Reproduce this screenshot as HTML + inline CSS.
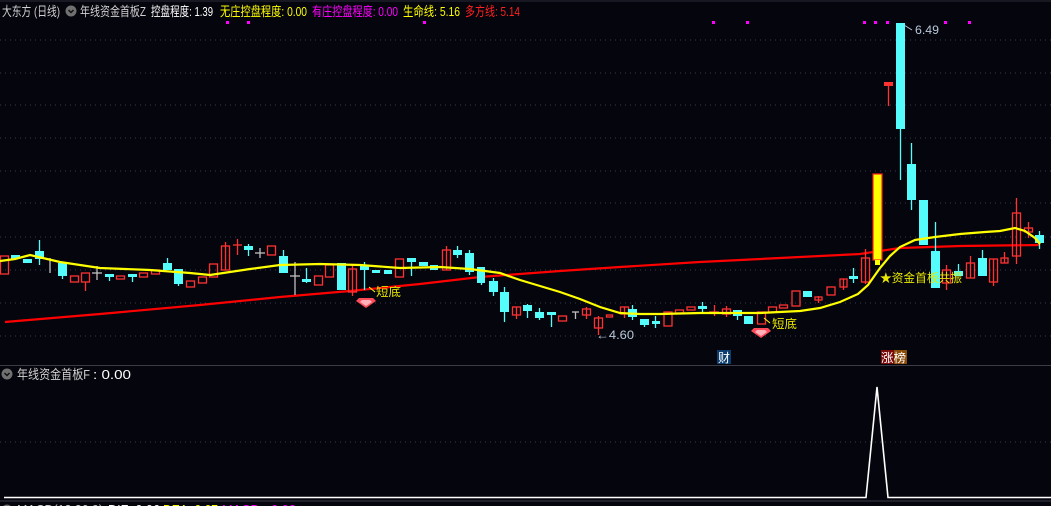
<!DOCTYPE html>
<html><head><meta charset="utf-8"><style>
html,body{margin:0;padding:0;background:#05050d;width:1051px;height:506px;overflow:hidden}
svg{display:block}
text{font-family:"Liberation Sans","Noto Sans CJK SC",sans-serif;font-size:12px}
.h{font-size:13px}
.r{fill:none;stroke:#ff3232;stroke-width:1.3}
.rf{fill:#ff3232}
.c{fill:#54fcfc}
.w{stroke:#ff3232;stroke-width:1.3}
.cw{stroke:#54fcfc;stroke-width:1.3}
.g{stroke:#c0c0c0;stroke-width:1.3}
.grid{stroke:#3a3a4a;stroke-width:1;stroke-dasharray:1 4}
</style></head><body>
<svg width="1051" height="506" viewBox="0 0 1051 506" xmlns="http://www.w3.org/2000/svg">
<g class="grid">
<line x1="0" y1="40" x2="1051" y2="40"/><line x1="0" y1="73" x2="1051" y2="73"/>
<line x1="0" y1="105" x2="1051" y2="105"/><line x1="0" y1="138" x2="1051" y2="138"/>
<line x1="0" y1="171" x2="1051" y2="171"/><line x1="0" y1="203" x2="1051" y2="203"/>
<line x1="0" y1="237" x2="1051" y2="237"/><line x1="0" y1="270" x2="1051" y2="270"/>
<line x1="0" y1="303" x2="1051" y2="303"/><line x1="0" y1="336" x2="1051" y2="336"/>
<line x1="0" y1="442" x2="1051" y2="442"/>
</g>
<line x1="0" y1="365.5" x2="1051" y2="365.5" stroke="#3c3c48" stroke-width="1"/>
<line x1="0" y1="1" x2="1051" y2="1" stroke="#2a2a36"/>

<text class="h" x="2" y="16" fill="#d0d0d0" textLength="58" lengthAdjust="spacingAndGlyphs">大东方 (日线)</text>
<circle cx="71" cy="11" r="5.5" fill="#707070"/><path d="M68.5 10l2.5 2.5 2.5-2.5" stroke="#111" stroke-width="1.5" fill="none"/>
<text class="h" x="80" y="16" fill="#d0d0d0" textLength="66" lengthAdjust="spacingAndGlyphs">年线资金首板Z</text>
<text class="h" x="151" y="16" fill="#ffffff" textLength="62" lengthAdjust="spacingAndGlyphs">控盘程度: 1.39</text>
<text class="h" x="220" y="16" fill="#ffff00" textLength="87" lengthAdjust="spacingAndGlyphs">无庄控盘程度: 0.00</text>
<text class="h" x="312" y="16" fill="#ff00ff" textLength="86" lengthAdjust="spacingAndGlyphs">有庄控盘程度: 0.00</text>
<text class="h" x="403" y="16" fill="#ffff00" textLength="57" lengthAdjust="spacingAndGlyphs">生命线: 5.16</text>
<text class="h" x="465" y="16" fill="#ff2020" textLength="55" lengthAdjust="spacingAndGlyphs">多方线: 5.14</text>

<g fill="#ff00ff">
<rect x="226" y="21" width="3" height="3"/><rect x="247" y="21" width="3" height="3"/><rect x="423" y="21" width="3" height="3"/>
<rect x="712" y="21" width="3" height="3"/><rect x="746" y="21" width="3" height="3"/><rect x="863" y="21" width="3" height="3"/>
<rect x="874" y="21" width="3" height="3"/><rect x="886" y="21" width="3" height="3"/><rect x="944" y="21" width="3" height="3"/><rect x="968" y="21" width="3" height="3"/>
</g>

<polyline fill="none" stroke="#ff0000" stroke-width="2.2" points="5,322 100,314 200,305 280,297 350,291 420,284 480,277 560,271 620,267 700,262 780,258 860,254 900,248 960,246 1040,245"/>

<g>
<rect class="r" x="0.5" y="256" width="8" height="18"/>
<rect class="c" x="11" y="255" width="9" height="4"/>
<rect class="c" x="23" y="259" width="9" height="4"/>
<line class="cw" x1="39.5" y1="240" x2="39.5" y2="265"/><rect class="c" x="35" y="251" width="9" height="8"/>
<line class="g" x1="50" y1="258" x2="50" y2="273"/>
<line class="cw" x1="62.5" y1="263" x2="62.5" y2="279"/><rect class="c" x="58" y="263" width="9" height="13"/>
<rect class="r" x="70.5" y="276" width="8" height="6"/>
<line class="w" x1="85.5" y1="282" x2="85.5" y2="291"/><rect class="r" x="81.5" y="273" width="8" height="9"/>
<line class="g" x1="97" y1="266" x2="97" y2="280"/><line class="g" x1="92" y1="273" x2="102" y2="273"/>
<line class="cw" x1="109.5" y1="274" x2="109.5" y2="281"/><rect class="c" x="105" y="274" width="9" height="3"/>
<rect class="r" x="116.5" y="276" width="8" height="3"/>
<line class="cw" x1="132.5" y1="274" x2="132.5" y2="282"/><rect class="c" x="128" y="274" width="9" height="3"/>
<rect class="r" x="139.5" y="273" width="8" height="4"/>
<rect class="r" x="151.5" y="270" width="8" height="4"/>
<line class="cw" x1="167.5" y1="258" x2="167.5" y2="270"/><rect class="c" x="163" y="263" width="9" height="7"/>
<line class="cw" x1="178.5" y1="269" x2="178.5" y2="286"/><rect class="c" x="174" y="269" width="9" height="15"/>
<rect class="r" x="186.5" y="281" width="8" height="6"/>
<rect class="r" x="198.5" y="277" width="8" height="6"/>
<rect class="r" x="209.5" y="264" width="8" height="13"/>
<line class="w" x1="225.5" y1="242" x2="225.5" y2="270"/><rect class="r" x="221.5" y="246" width="8" height="24"/>
<line class="w" x1="237.5" y1="239" x2="237.5" y2="255"/><line class="w" x1="233" y1="245" x2="242" y2="245"/>
<line class="cw" x1="248.5" y1="244" x2="248.5" y2="256"/><rect class="c" x="244" y="246" width="9" height="4"/>
<line class="g" x1="260" y1="248" x2="260" y2="258"/><line class="g" x1="255" y1="253" x2="265" y2="253"/>
<rect class="r" x="267.5" y="246" width="8" height="9"/>
<line class="cw" x1="283.5" y1="250" x2="283.5" y2="273"/><rect class="c" x="279" y="256" width="9" height="17"/>
<line class="g" x1="295" y1="262" x2="295" y2="295"/><line class="g" x1="290" y1="276" x2="300" y2="276"/>
<line class="cw" x1="306.5" y1="268" x2="306.5" y2="283"/><rect class="c" x="302" y="279" width="9" height="3"/>
<rect class="r" x="314.5" y="276" width="8" height="9"/>
<rect class="r" x="325.5" y="265" width="8" height="12"/>
<rect class="c" x="337" y="263" width="9" height="27"/>
<line class="w" x1="352.5" y1="265" x2="352.5" y2="296"/><rect class="r" x="348.5" y="269" width="8" height="23"/>
<line class="cw" x1="364.5" y1="262" x2="364.5" y2="290"/><rect class="c" x="360" y="266" width="9" height="4"/>
<rect class="c" x="372" y="270" width="8" height="3"/>
<rect class="c" x="384" y="270" width="8" height="4"/>
<rect class="r" x="395.5" y="259" width="8" height="18"/>
<line class="cw" x1="411.5" y1="258" x2="411.5" y2="276"/><rect class="c" x="407" y="258" width="9" height="4"/>
<rect class="c" x="419" y="262" width="9" height="4"/>
<rect class="c" x="430" y="265" width="8" height="5"/>
<line class="w" x1="446.5" y1="246" x2="446.5" y2="270"/><rect class="r" x="442.5" y="250" width="8" height="20"/>
<line class="cw" x1="457.5" y1="246" x2="457.5" y2="258"/><rect class="c" x="453" y="250" width="9" height="5"/>
<line class="cw" x1="469.5" y1="250" x2="469.5" y2="275"/><rect class="c" x="465" y="253" width="9" height="19"/>
<line class="cw" x1="481.5" y1="267" x2="481.5" y2="285"/><rect class="c" x="477" y="267" width="8" height="16"/>
<line class="cw" x1="493.5" y1="278" x2="493.5" y2="296"/><rect class="c" x="489" y="281" width="9" height="11"/>
<line class="cw" x1="504.5" y1="287" x2="504.5" y2="322"/><rect class="c" x="500" y="292" width="9" height="20"/>
<line class="w" x1="516.5" y1="307" x2="516.5" y2="319"/><rect class="r" x="512.5" y="307" width="8" height="8"/>
<line class="cw" x1="527.5" y1="304" x2="527.5" y2="318"/><rect class="c" x="523" y="305" width="9" height="6"/>
<line class="cw" x1="539.5" y1="308" x2="539.5" y2="320"/><rect class="c" x="535" y="312" width="9" height="6"/>
<line class="cw" x1="551.5" y1="312" x2="551.5" y2="327"/><rect class="c" x="547" y="312" width="9" height="3"/>
<rect class="r" x="558.5" y="316" width="8" height="5"/>
<line class="g" x1="575.5" y1="312" x2="575.5" y2="319"/><line class="g" x1="572" y1="312" x2="579" y2="312"/>
<line class="w" x1="586.5" y1="307" x2="586.5" y2="319"/><rect class="r" x="582.5" y="309" width="8" height="6"/>
<line class="w" x1="598.5" y1="316" x2="598.5" y2="335"/><rect class="r" x="594.5" y="318" width="8" height="10"/>
<rect class="r" x="606.5" y="315" width="6" height="2"/>
<line class="w" x1="624.5" y1="307" x2="624.5" y2="318"/><rect class="r" x="620.5" y="307" width="8" height="7"/>
<line class="cw" x1="632.5" y1="305" x2="632.5" y2="320"/><rect class="c" x="628" y="309" width="9" height="8"/>
<line class="cw" x1="644.5" y1="319" x2="644.5" y2="327"/><rect class="c" x="640" y="319" width="9" height="6"/>
<line class="cw" x1="655.5" y1="316" x2="655.5" y2="328"/><rect class="c" x="652" y="321" width="8" height="3"/>
<rect class="r" x="664" y="312" width="8" height="14"/>
<rect class="r" x="675.5" y="310" width="8" height="3"/>
<rect class="r" x="687" y="307" width="8" height="3"/>
<line class="cw" x1="702.5" y1="302" x2="702.5" y2="312"/><rect class="c" x="698" y="306" width="9" height="3"/>
<line class="w" x1="714.5" y1="305" x2="714.5" y2="316"/><line class="w" x1="709" y1="312" x2="719" y2="312"/>
<line class="w" x1="726.5" y1="306" x2="726.5" y2="317"/><rect class="r" x="722.5" y="309" width="8" height="5"/>
<line class="cw" x1="737.5" y1="310" x2="737.5" y2="320"/><rect class="c" x="733" y="310" width="9" height="6"/>
<rect class="c" x="744" y="316" width="9" height="8"/>
<rect class="r" x="757.5" y="312" width="8" height="12"/>
<rect class="r" x="768.5" y="307" width="8" height="5"/>
<rect class="r" x="779.5" y="305" width="8" height="3"/>
<rect class="r" x="792" y="291" width="8" height="15"/>
<rect class="c" x="803" y="291" width="9" height="6"/>
<line class="w" x1="818.5" y1="296" x2="818.5" y2="303"/><rect class="r" x="815" y="297" width="7" height="3"/>
<rect class="r" x="827" y="287" width="8" height="8"/>
<line class="w" x1="843.5" y1="279" x2="843.5" y2="290"/><rect class="r" x="840" y="279" width="7" height="8"/>
<line class="cw" x1="853.5" y1="268" x2="853.5" y2="283"/><rect class="c" x="849" y="276" width="9" height="3"/>
<line class="w" x1="865.5" y1="249" x2="865.5" y2="284"/><rect class="r" x="861.5" y="258" width="8" height="24"/>
<rect x="873" y="174" width="9" height="86" fill="#ffff00" stroke="#ff2020" stroke-width="1.2"/>
<rect x="875" y="260" width="5" height="5" fill="#ffff00"/>
<line class="w" x1="888.5" y1="84" x2="888.5" y2="106"/><rect class="rf" x="884" y="82" width="9" height="4"/>
<line class="cw" x1="900.5" y1="120" x2="900.5" y2="180"/><rect class="c" x="896" y="23" width="9" height="106"/>
<line class="cw" x1="911.5" y1="143" x2="911.5" y2="210"/><rect class="c" x="907" y="164" width="9" height="36"/>
<rect class="c" x="919" y="200" width="9" height="45"/>
<line class="cw" x1="935.5" y1="222" x2="935.5" y2="288"/><rect class="c" x="931" y="251" width="9" height="37"/>
<line class="w" x1="946.5" y1="265" x2="946.5" y2="290"/><rect class="r" x="942.5" y="270" width="8" height="13"/>
<line class="cw" x1="958.5" y1="264" x2="958.5" y2="276"/><rect class="c" x="954" y="271" width="9" height="5"/>
<line class="w" x1="970.5" y1="256" x2="970.5" y2="278"/><rect class="r" x="966.5" y="263" width="8" height="15"/>
<line class="cw" x1="982.5" y1="250" x2="982.5" y2="276"/><rect class="c" x="978" y="258" width="9" height="18"/>
<line class="w" x1="993.5" y1="259" x2="993.5" y2="286"/><rect class="r" x="989.5" y="259" width="8" height="23"/>
<line class="w" x1="1004.5" y1="252" x2="1004.5" y2="263"/><rect class="r" x="1001" y="258" width="7" height="5"/>
<line class="w" x1="1016.5" y1="198" x2="1016.5" y2="264"/><rect class="r" x="1012.5" y="213" width="8" height="43"/>
<line class="w" x1="1028.5" y1="222" x2="1028.5" y2="238"/><rect class="r" x="1024.5" y="228" width="8" height="4"/>
<line class="cw" x1="1039.5" y1="231" x2="1039.5" y2="249"/><rect class="c" x="1035" y="235" width="9" height="8"/>
</g>

<polyline fill="none" stroke="#ffff00" stroke-width="2.2" points="0,261 15,259 30,255 60,262 100,268 150,270 190,273 210,275 250,269 280,265 320,264 360,265 400,268 440,267 470,269 500,273 520,280 540,286 560,292 580,299 600,307 620,313 640,314 660,314 700,313 760,313 800,311 820,308 840,302 858,294 868,285 880,268 890,256 900,247 915,240 935,237 960,234 985,232 1000,231 1015,228 1025,231 1035,238 1040,244"/>

<line x1="904" y1="25" x2="912" y2="30" stroke="#b8c8d8"/>
<text x="915" y="34" fill="#b8c8d8" textLength="24" lengthAdjust="spacingAndGlyphs">6.49</text>
<text x="596" y="339" fill="#b8c8d8" textLength="38" lengthAdjust="spacingAndGlyphs">←4.60</text>
<line x1="369" y1="287" x2="375" y2="292" stroke="#ffff00"/>
<text x="376" y="296" fill="#e8e800" textLength="25" lengthAdjust="spacingAndGlyphs">短底</text>
<line x1="764" y1="318" x2="770" y2="323" stroke="#ffff00"/>
<text x="772" y="328" fill="#e8e800" textLength="25" lengthAdjust="spacingAndGlyphs">短底</text>
<g fill="#ff4a5a"><path d="M359 298h14l3 3-10 7-10-7z"/><path d="M362 300h8l2 2-6 4-6-4z" fill="#ffb0b8"/></g>
<g fill="#ff4a5a"><path d="M754 328h14l3 3-10 7-10-7z"/><path d="M757 330h8l2 2-6 4-6-4z" fill="#ffb0b8"/></g>
<text x="880" y="282" fill="#e8e800" textLength="82" lengthAdjust="spacingAndGlyphs">★资金首板共振</text>
<rect x="717" y="350" width="14" height="14" fill="#0b3e6e"/>
<text x="718" y="362" fill="#ffffff">财</text>
<rect x="881" y="350" width="13" height="14" fill="#7a0a0a"/>
<rect x="894" y="350" width="13" height="14" fill="#8a4a08"/>
<text x="881" y="362" fill="#ffffff" textLength="25" lengthAdjust="spacingAndGlyphs">涨榜</text>

<circle cx="7" cy="374" r="5.5" fill="#707070"/><path d="M4.5 373l2.5 2.5 2.5-2.5" stroke="#111" stroke-width="1.5" fill="none"/>
<text class="h" x="17" y="379" fill="#d0d0d0" textLength="73" lengthAdjust="spacingAndGlyphs">年线资金首板F</text>
<text class="h" x="93" y="379" fill="#ffffff" textLength="38" lengthAdjust="spacingAndGlyphs">: 0.00</text>
<polyline fill="none" stroke="#ffffff" stroke-width="1.6" points="4,497.5 866,497.5 877,387 888,497.5 1051,497.5"/>
<line x1="0" y1="501" x2="1051" y2="501" stroke="#3c3c48"/>
<circle cx="7" cy="510" r="5.5" fill="#707070"/>
<text class="h" x="17" y="514" fill="#d0d0d0" textLength="86" lengthAdjust="spacingAndGlyphs">MACD(12,26,9)</text>
<text class="h" x="108" y="514" fill="#ffffff" textLength="52" lengthAdjust="spacingAndGlyphs">DIF: 0.06</text>
<text class="h" x="163" y="514" fill="#ffff00" textLength="55" lengthAdjust="spacingAndGlyphs">DEA: 0.07</text>
<text class="h" x="222" y="514" fill="#ff00ff" textLength="74" lengthAdjust="spacingAndGlyphs">MACD: -0.02</text>
</svg>
</body></html>
